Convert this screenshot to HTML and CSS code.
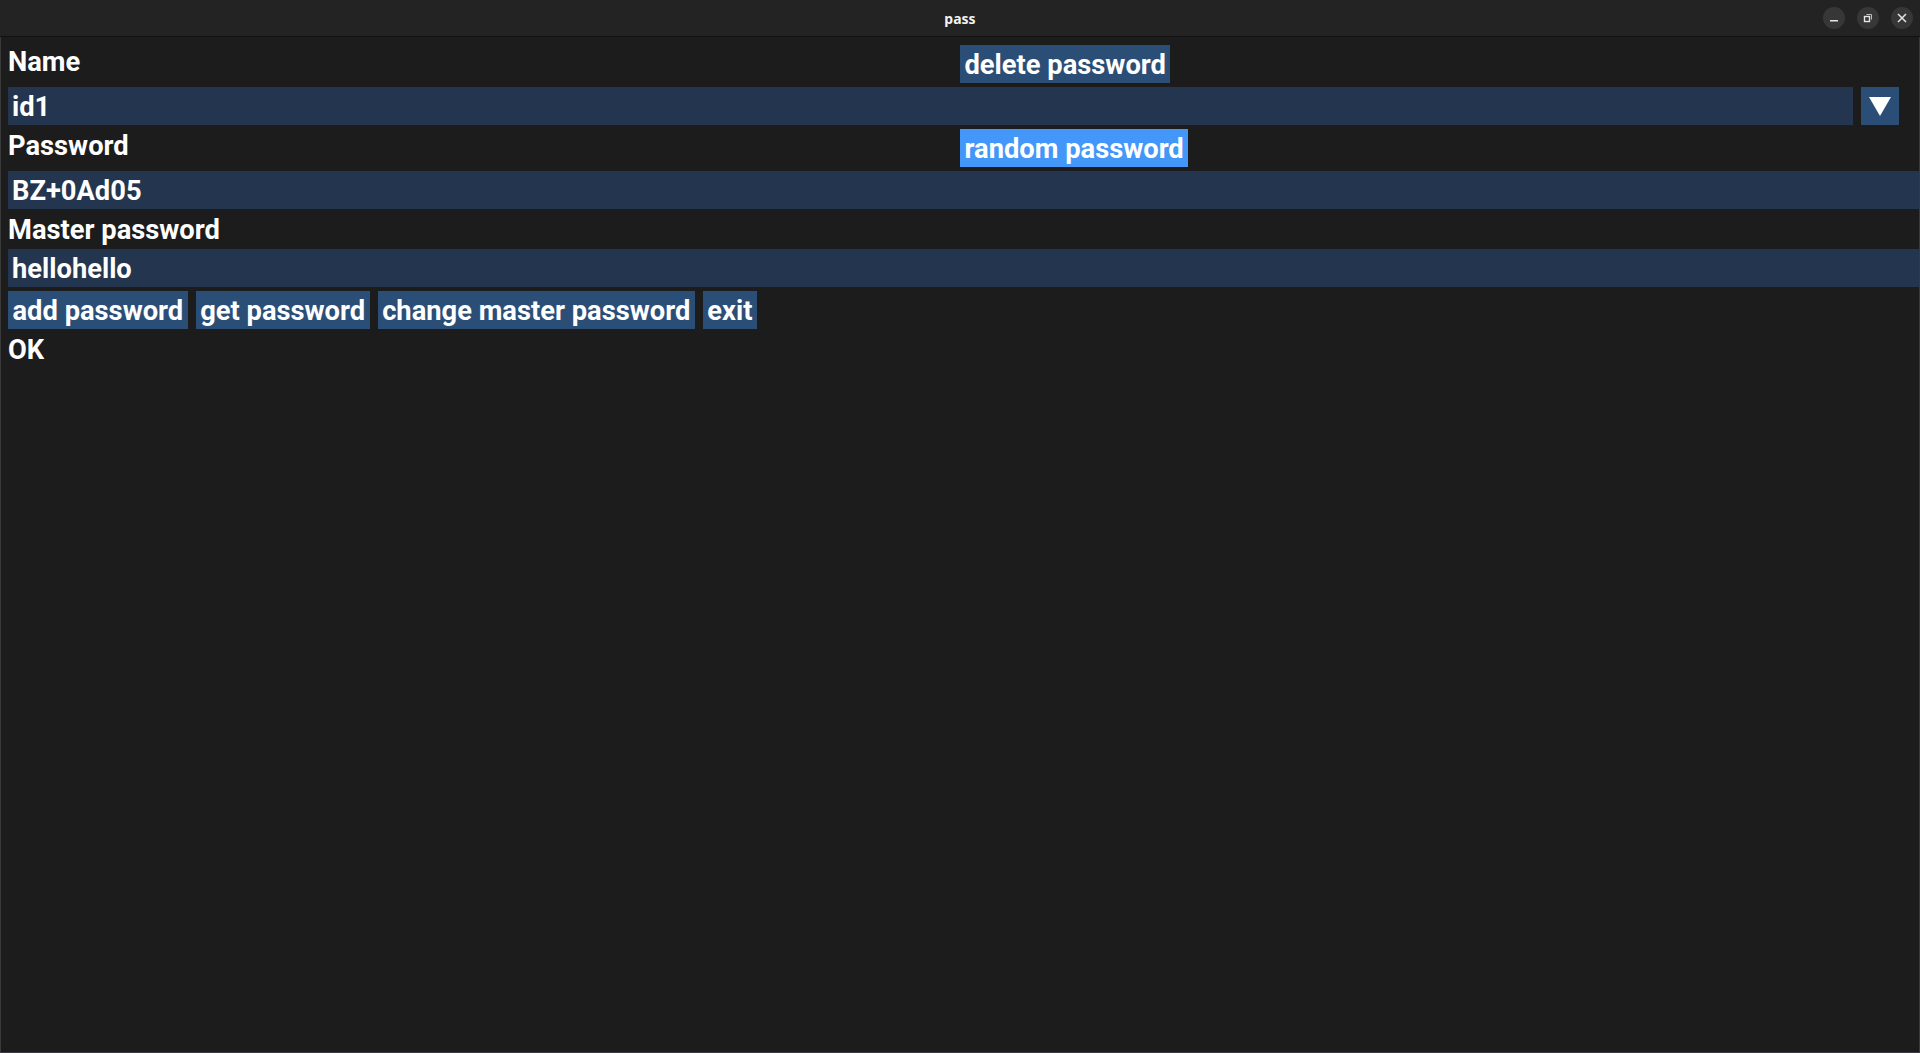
FILE: index.html
```html
<!DOCTYPE html>
<html>
<head>
<meta charset="utf-8">
<title>pass</title>
<link rel="stylesheet" href="styles.css">
</head>
<body>
<div class="window">
  <header class="titlebar">
    <div class="spacer"></div>
    <div class="title">pass</div>
    <div class="controls">
      <span class="ctl"><svg width="22" height="22" viewBox="0 0 22 22"><rect x="7" y="13" width="8" height="1.5" fill="#e6e6e6"/></svg></span>
      <span class="ctl"><svg width="22" height="22" viewBox="0 0 22 22"><path d="M9.5 7.5h5v5" fill="none" stroke="#bdbdbd" stroke-width="1"/><rect x="7.5" y="9.5" width="5" height="5" fill="none" stroke="#e6e6e6" stroke-width="1.4"/></svg></span>
      <span class="ctl"><svg width="22" height="22" viewBox="0 0 22 22"><path d="M7 7l8 8M15 7l-8 8" stroke="#e6e6e6" stroke-width="1.5" fill="none"/></svg></span>
    </div>
  </header>
  <main class="content">
    <div class="split">
      <span class="label">Name</span>
      <button class="btn">delete password</button>
    </div>
    <div class="combo">
      <div class="field">id1</div>
      <button class="btn drop"><svg width="22" height="19" viewBox="0 0 22 19"><polygon points="0,0 22,0 11,19" fill="#ffffff"/></svg></button>
    </div>
    <div class="split">
      <span class="label">Password</span>
      <button class="btn active">random password</button>
    </div>
    <div class="field">BZ+0Ad05</div>
    <span class="label">Master password</span>
    <div class="field">hellohello</div>
    <div class="actions">
      <button class="btn">add password</button>
      <button class="btn">get password</button>
      <button class="btn">change master password</button>
      <button class="btn">exit</button>
    </div>
    <span class="label">OK</span>
  </main>
</div>
</body>
</html>
```

FILE: styles.css
```css
html, body {
  margin: 0;
  padding: 0;
  background: #1c1c1c;
}

.window {
  width: 1920px;
  height: 1053px;
  display: flex;
  flex-direction: column;
  box-sizing: border-box;
}

.titlebar {
  height: 36px;
  flex: 0 0 36px;
  background: #232323;
  border-top: 1px solid #303030;
  border-bottom: 1px solid #121212;
  box-sizing: content-box;
  display: grid;
  grid-template-columns: 1fr auto 1fr;
  align-items: center;
  margin-top: -1px;
}

.title {
  font-family: "Noto Sans", "DejaVu Sans", sans-serif;
  font-weight: 700;
  font-size: 14px;
  color: #f2f2f2;
  padding-top: 1px;
}

.controls {
  display: flex;
  justify-content: flex-end;
  gap: 12px;
  padding-right: 7px;
}

.ctl {
  width: 22px;
  height: 22px;
  border-radius: 50%;
  background: #373737;
  display: flex;
}

.content {
  flex: 1;
  display: flex;
  flex-direction: column;
  gap: 4px;
  padding: 8px 0 0 7px;
  border: 1px solid #3a3a3a;
  border-top: none;
  border-bottom-color: #3c3b44;
  font-family: Roboto, "Liberation Sans", sans-serif;
  font-weight: 700;
  font-size: 27.3px;
  color: #ffffff;
}

.label {
  display: block;
  height: 31px;
  padding-top: 1px;
  line-height: 32px;
  white-space: nowrap;
  overflow: visible;
}

.split {
  display: grid;
  grid-template-columns: 952px auto;
  align-items: start;
  justify-content: start;
}

.btn {
  font: inherit;
  color: #ffffff;
  background: #2b4e77;
  border: none;
  margin: 0;
  height: 38px;
  padding: 2px 4.5px 0;
  line-height: 36px;
  white-space: nowrap;
  display: flex;
  align-items: center;
  box-sizing: border-box;
}

.btn.active {
  background: #4297f8;
}

.field {
  height: 38px;
  box-sizing: border-box;
  padding: 2px 0 0 4px;
  line-height: 36px;
  background: #24354f;
  white-space: nowrap;
}

.combo {
  display: flex;
  gap: 8px;
  padding-right: 20px;
}

.combo .field {
  flex: 1;
}

.btn.drop {
  width: 38px;
  justify-content: center;
  padding: 0;
}

.actions {
  display: flex;
  gap: 8px;
}
```
